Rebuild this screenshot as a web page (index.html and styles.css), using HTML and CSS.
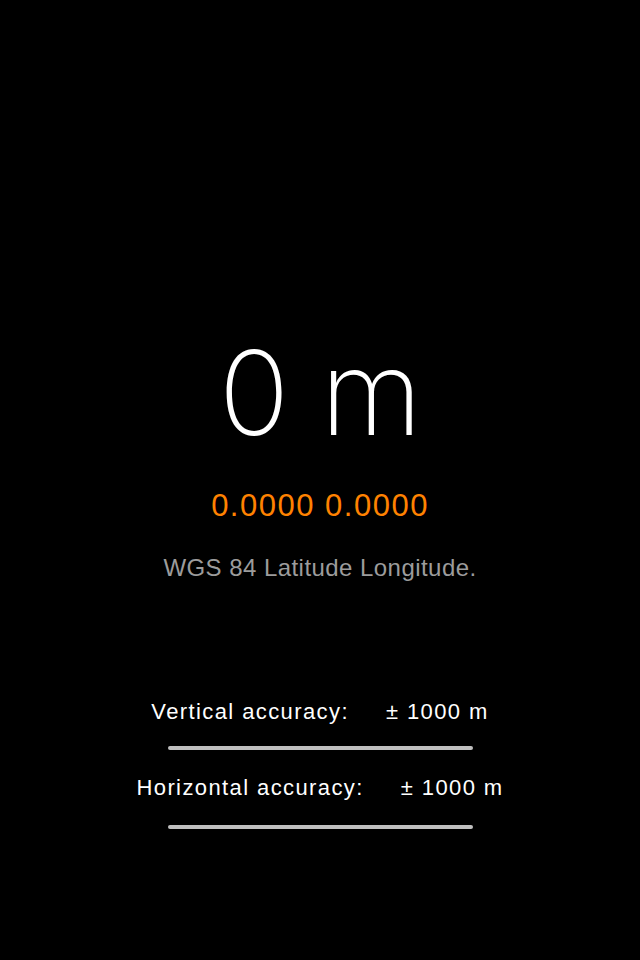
FILE: index.html
```html
<!DOCTYPE html>
<html>
<head>
<meta charset="utf-8">
<link rel="stylesheet" href="styles.css">
</head>
<body>
<main class="screen">
  <div class="altitude">0 m</div>
  <div class="coords">0.0000 0.0000</div>
  <div class="datum">WGS 84 Latitude Longitude.</div>
  <section class="accuracy">
    <div class="acc-row">
      <span class="acc-label">Vertical accuracy:</span>
      <span class="acc-value">± 1000 m</span>
    </div>
    <div class="acc-bar"></div>
    <div class="acc-row acc-row-second">
      <span class="acc-label">Horizontal accuracy:</span>
      <span class="acc-value">± 1000 m</span>
    </div>
    <div class="acc-bar acc-bar-second"></div>
  </section>
</main>
</body>
</html>
```

FILE: styles.css
```css
html, body {
  margin: 0;
  padding: 0;
  background: #000;
}

.screen {
  width: 640px;
  height: 960px;
  background: #000;
  display: flex;
  flex-direction: column;
  align-items: center;
  padding-top: 333px;
  box-sizing: border-box;
  font-family: "Liberation Sans", Arial, sans-serif;
}

.altitude {
  font-family: Inter, Roboto, "Liberation Sans", sans-serif;
  font-weight: 200;
  font-size: 117px;
  line-height: 120px;
  letter-spacing: -1px;
  color: #fff;
  white-space: pre;
}

.coords {
  margin-top: 37px;
  font-size: 31px;
  line-height: 31px;
  letter-spacing: 1.5px;
  color: #ff8200;
}

.datum {
  margin-top: 35px;
  font-size: 24px;
  line-height: 24px;
  letter-spacing: 0.45px;
  color: #9c9c9c;
}

.accuracy {
  margin-top: 121px;
  display: flex;
  flex-direction: column;
  align-items: center;
}

.acc-row {
  display: flex;
  gap: 37px;
  font-size: 22px;
  line-height: 22px;
  letter-spacing: 1.4px;
  color: #fff;
}

.acc-row-second {
  margin-top: 27px;
}

.acc-bar {
  margin-top: 23px;
  width: 305px;
  height: 4px;
  border-radius: 2px;
  background: #bfbfbf;
}

.acc-bar-second {
  margin-top: 26px;
}
```
